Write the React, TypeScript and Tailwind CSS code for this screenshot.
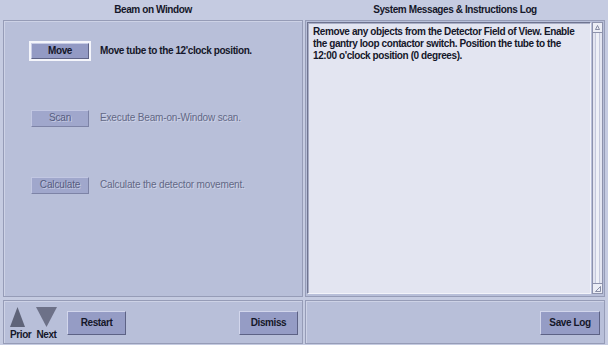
import React from "react";

const FONT = "font-['Liberation_Sans',Arial,sans-serif]";
const BOLD = "text-[10px] font-bold tracking-[-0.4px]";
const REG = "text-[10px] tracking-[-0.15px]";

function ActionRow({
  label,
  desc,
  enabled,
  focused,
}: {
  label: string;
  desc: string;
  enabled: boolean;
  focused?: boolean;
}) {
  return (
    <div className="flex h-[20px] items-center">
      <div
        className={`flex h-[20px] w-[62px] items-center justify-center p-[2px] ${
          focused ? "bg-[#f4f5fb]" : ""
        }`}
      >
        {enabled ? (
          <div
            className={`flex h-full w-full items-center justify-center border border-b-[#5e6386] border-l-[#c9cde6] border-r-[#5e6386] border-t-[#c9cde6] bg-[#939ac4] leading-none text-[#15172a] ${BOLD}`}
          >
            {label}
          </div>
        ) : (
          <div
            className={`flex h-[17px] w-[59px] items-center justify-center border border-b-[#7d83a6] border-l-[#c2c7e2] border-r-[#7d83a6] border-t-[#c2c7e2] bg-[#a0a7cc] leading-none text-[#565c80] [text-shadow:1px_1px_0_#c3c7e0] ${REG}`}
          >
            {label}
          </div>
        )}
      </div>
      <div
        className={`ml-[9px] leading-none ${
          enabled
            ? `text-[#15172a] ${BOLD}`
            : `text-[#626885] [text-shadow:1px_1px_0_#cfd3e8] ${REG}`
        }`}
      >
        {desc}
      </div>
    </div>
  );
}

function Btn({ children, w = 59 }: { children: React.ReactNode; w?: number }) {
  return (
    <div
      className={`flex h-[24px] items-center justify-center border border-b-[#5d6285] border-l-[#d2d6ec] border-r-[#5d6285] border-t-[#d2d6ec] bg-[#959cc5] leading-none text-[#15172a] ${BOLD}`}
      style={{ width: w }}
    >
      {children}
    </div>
  );
}

export default function App() {
  return (
    <div
      className={`${FONT} flex h-[345px] w-[608px] flex-col overflow-hidden bg-[#c5cbe1] px-[3px] text-[#15172a]`}
    >
      {/* headers */}
      <div className="flex h-[20px] gap-[2px]">
        <div className={`flex w-[300px] items-center justify-center leading-none ${BOLD}`}>
          Beam on Window
        </div>
        <div className={`flex w-[300px] items-center justify-center leading-none ${BOLD}`}>
          System Messages &amp; Instructions Log
        </div>
      </div>

      {/* main panels */}
      <div className="flex h-[277px] gap-[2px]">
        <div className="flex w-[300px] flex-col gap-[47px] border border-[#969cb7] bg-[#b8bfd9] pl-[25px] pt-[20px] shadow-[inset_1px_1px_0_#cdd2e6]">
          <ActionRow
            label="Move"
            desc="Move tube to the 12'clock position."
            enabled
            focused
          />
          <ActionRow
            label="Scan"
            desc="Execute Beam-on-Window scan."
            enabled={false}
          />
          <ActionRow
            label="Calculate"
            desc="Calculate the detector movement."
            enabled={false}
          />
        </div>

        <div className="flex w-[300px] border border-[#969cb7] bg-[#b8bfd9] p-[1px] pb-[2px]">
          <div
            className={`flex-1 whitespace-nowrap border border-b-[#f3f4fa] border-l-[#6f7490] border-r-[#f3f4fa] border-t-[#6f7490] bg-[#e3e5f1] pl-[5px] pr-[4px] pt-[3px] leading-[12px] text-[#15172a] shadow-[inset_1px_1px_0_#a9aec6] ${BOLD}`}
          >
            <div>Remove any objects from the Detector Field of View. Enable</div>
            <div>the gantry loop contactor switch. Position the tube to the</div>
            <div>12:00 o&apos;clock position (0 degrees).</div>
          </div>
          <div className="ml-[1px] flex w-[11px] flex-col border border-[#8d92ac] bg-[#e3e5f1]">
            <div className="flex h-[10px] items-center justify-center border-b border-[#8d92ac] bg-[#eceef6]">
              <svg width="5" height="5" viewBox="0 0 5 5">
                <path d="M2.5 0.5 L4.5 4.5 L0.5 4.5 Z" fill="none" stroke="#6f7490" strokeWidth="0.8" />
              </svg>
            </div>
            <div className="flex flex-1 justify-center">
              <div className="w-[5px] border-x border-[#c5c9dc] bg-[#eef0f7]" />
            </div>
            <div className="flex h-[10px] items-center justify-center border-t border-[#8d92ac] bg-[#eceef6]">
              <svg width="6" height="6" viewBox="0 0 6 6">
                <path d="M5.5 0.5 L5.5 5.5 L0.5 5.5 Z" fill="none" stroke="#6f7490" strokeWidth="0.8" />
              </svg>
            </div>
          </div>
        </div>
      </div>

      {/* bottom bars */}
      <div className="mt-[3px] flex h-[44px] gap-[2px]">
        <div className="flex w-[300px] items-start border border-[#969cb7] bg-[#b8bfd9] pl-[6px] pr-[4px] shadow-[inset_1px_1px_0_#cdd2e6]">
          <div className="mt-[6px] flex gap-[5px]">
            <div className="flex w-[21px] flex-col items-start">
              <svg width="15" height="20" viewBox="0 0 15 20">
                <path d="M7.5 0 L15 20 L0 20 Z" fill="#5f6479" />
              </svg>
              <div className={`mt-[3px] leading-[10px] ${BOLD}`}>Prior</div>
            </div>
            <div className="flex w-[21px] flex-col items-center">
              <svg width="21" height="20" viewBox="0 0 21 20">
                <path d="M0 0 L21 0 L10.5 20 Z" fill="#6d7188" />
              </svg>
              <div className={`mt-[3px] leading-[10px] ${BOLD}`}>Next</div>
            </div>
          </div>
          <div className="ml-[10px] mt-[10px]">
            <Btn>Restart</Btn>
          </div>
          <div className="ml-auto mt-[10px]">
            <Btn>Dismiss</Btn>
          </div>
        </div>
        <div className="flex w-[300px] items-start justify-end border border-[#969cb7] bg-[#b8bfd9] pr-[4px] shadow-[inset_1px_1px_0_#cdd2e6]">
          <div className="mt-[10px]">
            <Btn w={60}>Save Log</Btn>
          </div>
        </div>
      </div>
    </div>
  );
}
